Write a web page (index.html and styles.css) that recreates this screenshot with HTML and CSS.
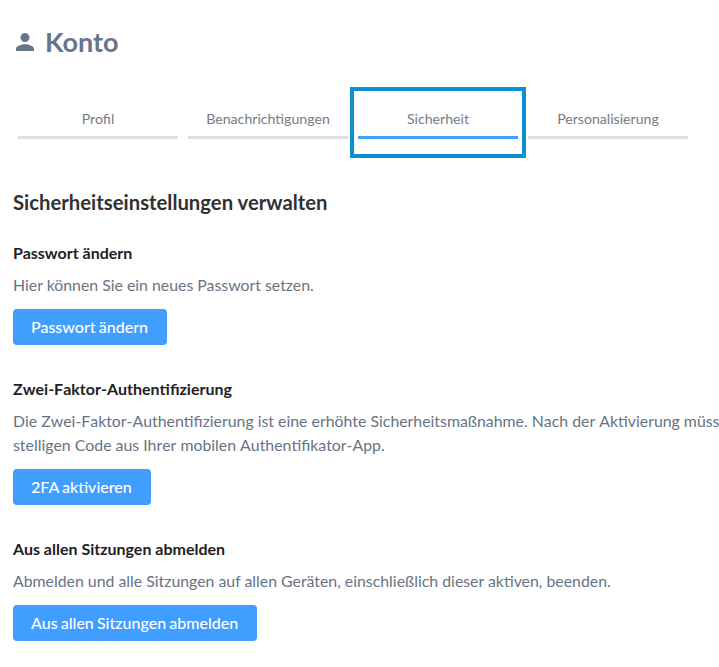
FILE: index.html
```html
<!DOCTYPE html>
<html lang="de">
<head>
<meta charset="utf-8">
<title>Konto</title>
<link rel="stylesheet" href="styles.css">
</head>
<body>
<div class="page">
  <h1 class="title">
    <svg class="title-icon" viewBox="4 4 16 16" aria-hidden="true"><path d="M12 12c2.210 0 4-1.790 4-4s-1.790-4-4-4-4 1.790-4 4 1.790 4 4 4zm0 2c-2.670 0-8 1.340-8 4v2h16v-2c0-2.660-5.330-4-8-4z"/></svg>
    Konto
  </h1>
  <nav class="tabs">
    <a class="tab">Profil</a>
    <a class="tab">Benachrichtigungen</a>
    <a class="tab tab-active">Sicherheit<span class="focus-box"></span></a>
    <a class="tab">Personalisierung</a>
  </nav>
  <h2 class="heading">Sicherheitseinstellungen verwalten</h2>
  <section class="block block-first">
    <h3 class="subheading">Passwort ändern</h3>
    <p class="text">Hier können Sie ein neues Passwort setzen.</p>
    <button class="btn">Passwort ändern</button>
  </section>
  <section class="block">
    <h3 class="subheading no-kern">Zwei-Faktor-Authentifizierung</h3>
    <p class="text no-kern">Die Zwei-Faktor-Authentifizierung ist eine erhöhte Sicherheitsmaßnahme. Nach der Aktivierung müssen Sie einen sechs-<br>stelligen Code aus Ihrer mobilen Authentifikator-App.</p>
    <button class="btn">2FA aktivieren</button>
  </section>
  <section class="block">
    <h3 class="subheading">Aus allen Sitzungen abmelden</h3>
    <p class="text">Abmelden und alle Sitzungen auf allen Geräten, einschließlich dieser aktiven, beenden.</p>
    <button class="btn">Aus allen Sitzungen abmelden</button>
  </section>
</div>
</body>
</html>
```
FILE: styles.css
```css
* { box-sizing: border-box; }
html, body { margin: 0; height: 100%; overflow: hidden; background: #fff; }
body { font-family: Lato, "Liberation Sans", sans-serif; color: #606266; }
.page { padding: 23px 0 0 13px; width: 719px; }
.title {
  display: flex; align-items: center; gap: 11px;
  margin: 0 0 0 3px; height: 38px;
  font-size: 27px; font-weight: 700; line-height: 38px; color: #67758b;
}
.title-icon { width: 18px; height: 18px; fill: #67758b; }
.tabs { display: flex; gap: 10px; margin: 26px 0 0 5px; }
.tab {
  position: relative; display: block; width: 160px; height: 52px;
  padding-top: 22px; text-align: center;
  font-size: 14.150px; line-height: 20px; color: #767b84;
  border-bottom: 3px solid #dfdfdf;
}
.tab-active { border-bottom-color: #409eff; }
.focus-box {
  position: absolute; left: -8px; right: -8px; top: 0; bottom: -22px;
  border: 4px solid #0a8fd3;
}
.heading { margin: 49px 0 0; font-size: 20.300px; font-weight: 700; line-height: 28px; color: #303133; }
.block { margin-top: 33px; }
.block-first { margin-top: 26px; }
.subheading { margin: 0; font-size: 16px; font-weight: 700; line-height: 22px; color: #1f2024; }
.text { margin: 9px 0 0; font-size: 15.850px; line-height: 24px; color: #677384; white-space: nowrap; }
.no-kern { font-kerning: none; }
.btn {
  display: block; margin-top: 12px; height: 36px; padding: 0 19px 0 18px;
  border: 0; border-radius: 4px; background: #409eff; color: #fff;
  font-family: inherit; font-size: 16px; font-weight: 500; line-height: 36px; word-spacing: -0.900px;
}
```
